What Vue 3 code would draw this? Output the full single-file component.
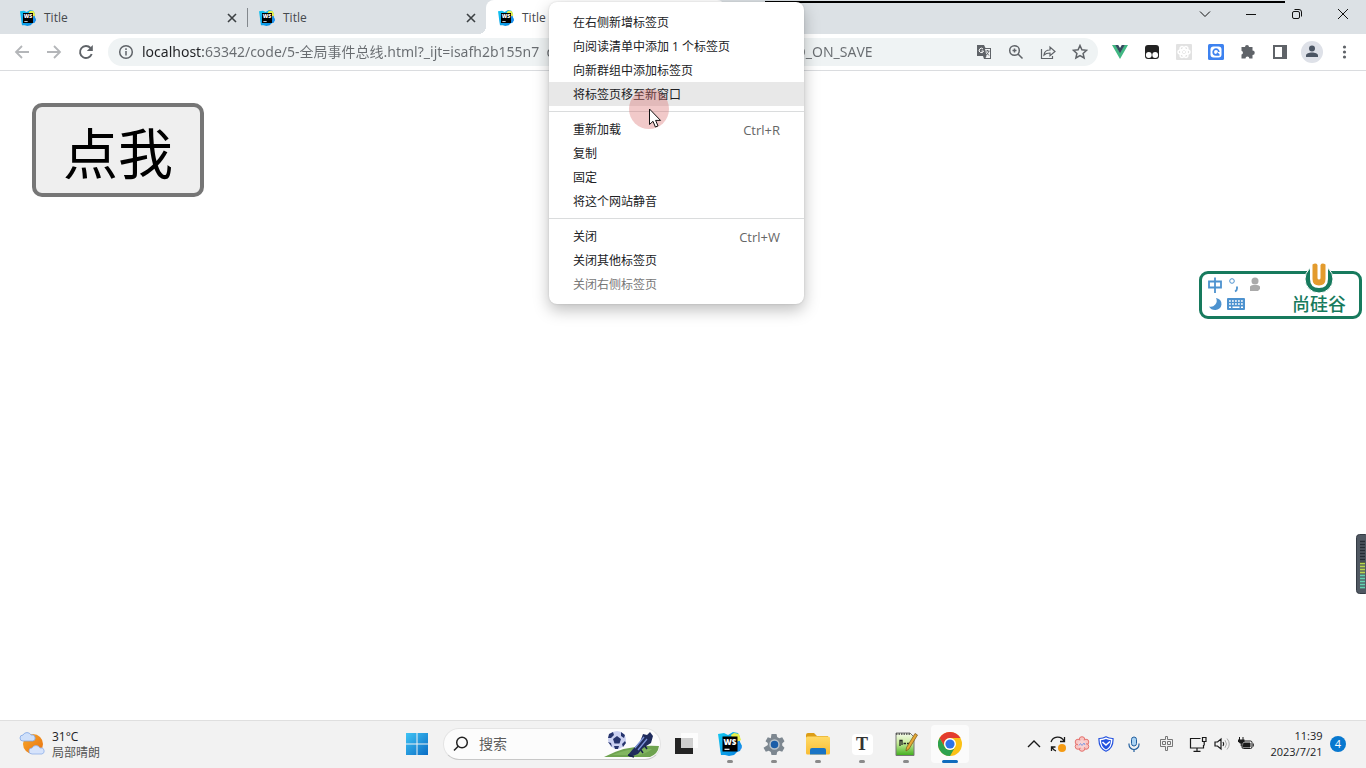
<script setup>
import { ref } from 'vue'

const tabs = [
  { id: 1, title: 'Title', active: false },
  { id: 2, title: 'Title', active: false },
  { id: 3, title: 'Title', active: true },
]

const url = ref('localhost:63342/code/5-全局事件总线.html?_ijt=isafh2b155n7  q3k8m0vd5tu2rate&_ij_reload=RELOAD_ON_SAVE')
const query = ref('')

const menuGroups = [
  [
    { label: '在右侧新增标签页' },
    { label: '向阅读清单中添加 1 个标签页' },
    { label: '向新群组中添加标签页' },
    { label: '将标签页移至新窗口', hover: true },
  ],
  [
    { label: '重新加载', keys: 'Ctrl+R' },
    { label: '复制' },
    { label: '固定' },
    { label: '将这个网站静音' },
  ],
  [
    { label: '关闭', keys: 'Ctrl+W' },
    { label: '关闭其他标签页' },
    { label: '关闭右侧标签页', disabled: true },
  ],
]

const darkBars = Array.from({ length: 8 }, (_, i) => 6 + i * 3)
const litBars = Array.from({ length: 9 }, (_, i) => 29 + i * 3)
</script>

<template>
  <div class="screen">
    <svg class="defs" aria-hidden="true">
      <defs>
        <linearGradient id="wsg" x1="0" y1="0" x2="1" y2="1">
          <stop offset="0" stop-color="#12c9f2" />
          <stop offset="1" stop-color="#087fe0" />
        </linearGradient>
        <linearGradient id="wing" x1="0" y1="0" x2="1" y2="1">
          <stop offset="0" stop-color="#3fc4f5" />
          <stop offset="1" stop-color="#0a6cc4" />
        </linearGradient>
        <linearGradient id="sun" x1="0" y1="0" x2="1" y2="1">
          <stop offset="0" stop-color="#f8a92c" />
          <stop offset="1" stop-color="#e8700f" />
        </linearGradient>
        <linearGradient id="fold" x1="0" y1="0" x2="0" y2="1">
          <stop offset="0" stop-color="#ffda66" />
          <stop offset="1" stop-color="#f9bd35" />
        </linearGradient>
        <linearGradient id="npp" x1="0" y1="0" x2="0" y2="1">
          <stop offset="0" stop-color="#f6fbef" />
          <stop offset="0.45" stop-color="#c8ec9a" />
          <stop offset="1" stop-color="#3fae1c" />
        </linearGradient>
        <symbol id="ws" viewBox="0 0 24 24">
          <path d="M0 2l6-1 4 2 5-3 5 1 2 4v5l2 4-2 5-3 1-3 3-5 1-4-1-4 0-1-6-1-8z" fill="url(#wsg)" />
          <path d="M13 3l3-2 5 1 2 6-3 2-6-4z" fill="#e6f04c" />
          <path d="M20 9l2 0-1 3 3 4-4 3z" fill="#1f8ff0" />
          <rect x="4.500" y="4.500" width="15" height="15" fill="#000" />
          <path d="M6.500 17.300h5" stroke="#fff" stroke-width="1.200" />
          <text x="5.500" y="12.600" class="wsText">WS</text>
        </symbol>
      </defs>
    </svg>

    <header class="browser">
      <div class="strip">
        <nav class="tabs" aria-label="标签页">
          <div v-for="t in tabs" :key="t.id" class="tab" :class="{ active: t.active }">
            <button class="tabMain"><svg class="fav"><use href="#ws" /></svg><span>{{ t.title }}</span></button>
            <button class="tabClose" aria-label="关闭标签页">
              <svg viewBox="0 0 16 16"><path d="M4 4l8 8M12 4l-8 8" stroke="#3c4043" stroke-width="1.600" /></svg>
            </button>
          </div>
        </nav>
        <div class="winCtl">
          <button aria-label="搜索标签页"><svg viewBox="0 0 16 16"><path d="M3 5.500l5 5 5-5" /></svg></button>
          <button aria-label="最小化"><svg viewBox="0 0 16 16"><path d="M3 8.500h10" /></svg></button>
          <button aria-label="还原"><svg viewBox="0 0 16 16"><rect x="3.500" y="5.500" width="7" height="7" rx="1.500" /><path d="M5.500 3.500h4.500q2.500 0 2.500 2.500v4.500" /></svg></button>
          <button aria-label="关闭"><svg viewBox="0 0 16 16"><path d="M3 3l10 10M13 3l-10 10" /></svg></button>
        </div>
      </div>

      <div class="toolbar">
        <button class="tool off" aria-label="后退"><svg viewBox="0 0 16 16"><path d="M15 8H2M8 2L2 8l6 6" /></svg></button>
        <button class="tool off" aria-label="前进"><svg viewBox="0 0 16 16"><path d="M1 8h13M8 2l6 6-6 6" /></svg></button>
        <button class="tool reload" aria-label="重新加载"><svg viewBox="0 0 16 16"><path d="M13.700 10A6 6 0 1 1 12.500 4" /><path d="M14.800 1v6h-6z" fill="#5f6368" stroke="none" /></svg></button>
        <div class="omni">
          <button class="info" aria-label="网站信息"><svg viewBox="0 0 16 16"><circle cx="8" cy="8" r="6.300" /><path d="M8 7v4.500M8 4.300v1.700" /></svg></button>
          <input v-model="url" class="url" aria-label="地址" spellcheck="false">
          <button class="tool" aria-label="翻译">
            <svg viewBox="0 0 16 16"><path d="M1 1h7l1.500 3H15v11H8l-1-3H1z" fill="#5f6368" stroke="none" /><path d="M9 5h5v9H9.500l1-2z" fill="#f1f3f4" stroke="none" /><path d="M7 5a2.200 2.200 0 1 0 .5 2H5.500" stroke="#fff" stroke-width="1" /><path d="M9.500 7h4M11.500 6v1M13 7q-1 3-3 4M10.500 8.500l2.500 3" stroke-width=".9" /></svg>
          </button>
          <button class="tool" aria-label="缩放"><svg viewBox="0 0 16 16"><circle cx="6.500" cy="6.500" r="4.800" /><path d="M10 10l4.500 4.500M4.500 6.500h4M6.500 4.500v4" /></svg></button>
          <button class="tool" aria-label="分享"><svg viewBox="0 0 16 16"><path d="M1.500 5v9.500h11V12M4 11q.5-5 6-5V3l5 4.500-5 4.300V9Q6 9 4 11z" stroke-width="1.200" /></svg></button>
          <button class="tool" aria-label="收藏"><svg viewBox="0 0 16 16"><path d="M8 1.500l1.900 4.300 4.700.5-3.500 3.100 1 4.600L8 11.600 3.900 14l1-4.600L1.400 6.300l4.700-.5z" /></svg></button>
        </div>
        <button class="tool" aria-label="Vue"><svg viewBox="0 0 16 16" class="plain"><path d="M0 1h3.500L8 8.500 12.500 1H16L8 15z" fill="#41b883" /><path d="M3.200 1H6.200L8 4l1.800-3h3L8 9.200z" fill="#35495e" /></svg></button>
        <button class="tool" aria-label="Tampermonkey"><svg viewBox="0 0 16 16" class="plain"><rect x="1" y="1" width="14" height="14" rx="3" fill="#222" /><circle cx="4.800" cy="11" r="2.900" fill="#fff" /><circle cx="11.200" cy="11" r="2.900" fill="#fff" /></svg></button>
        <button class="tool" aria-label="React"><svg viewBox="0 0 16 16" class="plain"><rect width="16" height="16" rx="1" fill="#e2e2e2" /><g fill="none" stroke="#fff"><ellipse cx="8" cy="8" rx="6" ry="2.500" /><ellipse cx="8" cy="8" rx="6" ry="2.500" transform="rotate(60 8 8)" /><ellipse cx="8" cy="8" rx="6" ry="2.500" transform="rotate(120 8 8)" /></g><circle cx="8" cy="8" r="1.200" fill="#fff" /></svg></button>
        <button class="tool" aria-label="Q"><svg viewBox="0 0 16 16" class="plain"><rect width="16" height="16" rx="1.500" fill="#3d82f0" /><rect x="2.500" y="2.500" width="11" height="11" rx="3" fill="#fff" /><path d="M10.800 8a2.800 2.800 0 1 0-2.800 2.800h3.500M8.800 8.800l2.200 2" fill="none" stroke="#3d82f0" stroke-width="1.700" /></svg></button>
        <button class="tool" aria-label="扩展程序"><svg viewBox="0 0 16 16" class="plain"><path d="M5 3a2 2 0 0 1 4 0h3.500v3.500a2 2 0 0 1 0 4.500v3.500H9.300a1.900 1.900 0 0 0-3.800 0H1.500v-4a1.900 1.900 0 0 0 0-3.700V3z" fill="#5f6368" /></svg></button>
        <button class="tool" aria-label="侧边栏"><svg viewBox="0 0 16 16" class="plain"><rect x="2" y="2" width="12" height="12" fill="none" stroke="#5f6368" stroke-width="2" /><path d="M10 2h4v12h-4z" fill="#5f6368" /></svg></button>
        <button class="tool avatar" aria-label="用户"><svg viewBox="0 0 22 22" class="plain"><circle cx="11" cy="11" r="11" fill="#dee1e8" /><circle cx="11" cy="7.500" r="3" fill="#4b5563" /><path d="M5 16v-1.500c0-4 12-4 12 0V16z" fill="#4b5563" /></svg></button>
        <button class="tool" aria-label="更多"><svg viewBox="0 0 16 16" class="plain"><g fill="#5f6368"><circle cx="8.500" cy="3" r="1.600" /><circle cx="8.500" cy="8" r="1.600" /><circle cx="8.500" cy="13" r="1.600" /></g></svg></button>
      </div>
    </header>

    <main class="page">
      <button class="clickMe">点我</button>
    </main>

    <footer class="taskbar">
      <button class="weather">
        <svg viewBox="0 0 26 24"><circle cx="14" cy="12" r="10" fill="url(#sun)" /><path d="M4 9a3 3 0 0 1 0-6 4.500 4.500 0 0 1 8 0 3 3 0 0 1 2 6z" fill="#cfe0fa" stroke="#7fa6e6" stroke-width=".8" /><path d="M13 22a3 3 0 0 1 0-6 4.500 4.500 0 0 1 8 0 3 3 0 0 1 2 6z" fill="#d6e3fb" stroke="#8fb0ea" stroke-width=".8" /></svg>
        <span class="wText"><span>31°C</span><span class="dim">局部晴朗</span></span>
      </button>

      <div class="apps">
        <button class="app" aria-label="开始"><svg viewBox="0 0 24 24"><path d="M1 1h10.500v10.500H1zM12.500 1H23v10.500H12.500zM1 12.500h10.500V23H1zM12.500 12.500H23V23H12.500z" fill="url(#wing)" /></svg></button>
        <label class="search">
          <svg class="mag" viewBox="0 0 16 16"><circle cx="9" cy="6.500" r="5.300" /><path d="M5.200 10.300L1 14.500" /></svg>
          <input v-model="query" placeholder="搜索" aria-label="搜索">
          <svg class="art" viewBox="0 0 56 28">
            <path d="M0 27Q24 14 55 16 54 24 46 27z" fill="#6fa350" />
            <path d="M8 25q20-8 40-6-6 5-14 6z" fill="#82b660" />
            <circle cx="13" cy="10" r="9" fill="#ccd2f2" />
            <path d="M13 6l4 3-1.500 4.500h-5L9 9zM5 4l4-2 1 3-3 3-3 0zM17 2l4 3-1 3-3-2zM4 12l3 1 1 4zM21 11l1 2-3 4-1-3zM10 16h5l-1 3h-3z" fill="#27356e" />
            <path d="M24 25l5-6 7-7 3-8 4 1 3-3 3 4-2 7-8 5-5 6-8 3z" fill="#202c5d" />
            <path d="M31 18l9-11M34 20l9-11" stroke="#7d94d8" stroke-width="1.300" />
            <path d="M24 25l6 2M37 20l2 3M41 16l2 3" stroke="#17224a" stroke-width="1.500" />
          </svg>
        </label>
        <button class="app" aria-label="任务视图"><svg viewBox="0 0 24 24"><rect x="1" y="6" width="18" height="16" fill="#242424" /><rect x="7" y="1" width="17" height="15" fill="#fff" opacity=".78" /></svg></button>
        <button class="app open" aria-label="WebStorm"><svg><use href="#ws" /></svg></button>
        <button class="app open" aria-label="设置"><svg viewBox="0 0 24 24"><path d="M9.500 2h5l.7 3 2 1.200 3-1 2.300 4-2.300 2.200v2l2.300 2.300-2.300 4-3-1-2 1.300-.7 3h-5l-.7-3-2-1.300-3 1-2.300-4L5.800 13v-2L3.500 9.200l2.300-4 3 1z" fill="#7d8790" /><circle cx="12.500" cy="12.500" r="4.500" fill="#1c5ea8" stroke="#b9c3cb" stroke-width="1.500" /></svg></button>
        <button class="app open" aria-label="文件资源管理器"><svg viewBox="0 0 24 24"><path d="M0 3q0-2 2-2h6l3 3h11v5H0z" fill="#dc9d17" /><rect y="4.500" width="24" height="18" rx="1.500" fill="url(#fold)" /><path d="M4 22.500V18q0-2 2-2h12q2 0 2 2v4.500z" fill="#1974c5" /></svg></button>
        <button class="app open typora" aria-label="Typora"><span>T</span></button>
        <button class="app open" aria-label="Notepad++"><svg viewBox="0 0 24 24"><path d="M2 1h14l4 4v18.500H2z" fill="url(#npp)" stroke="#777" /><path d="M2 2h15" stroke="#444" stroke-width="1.500" stroke-dasharray="1.500 1" /><path d="M6 14V8.500h2V13M9.500 11.500h2.500M13 11.500h2.500" stroke="#222" stroke-width="1.300" fill="none" /><path d="M21 1.500l2.500 1.500-8.500 14-3 2 .5-3.500z" fill="#e5a936" stroke="#795316" stroke-width=".7" /></svg></button>
        <button class="app open current" aria-label="Chrome"><svg viewBox="0 0 24 24"><circle cx="12" cy="12" r="12" fill="#fbc116" /><path d="M1.600 6a12 12 0 0 1 20.800 0H12a6 6 0 0 0-5.200 9z" fill="#e33b2e" /><path d="M1.600 6a12 12 0 0 0 10.400 18l5.200-9a6 6 0 0 1-10.400 0z" fill="#2da24e" /><circle cx="12" cy="12" r="6" fill="#fff" /><circle cx="12" cy="12" r="4.600" fill="#2d73e8" /></svg></button>
      </div>

      <div class="tray">
        <button aria-label="显示隐藏的图标"><svg viewBox="0 0 16 16"><path d="M2 11l6-6 6 6" stroke-width="1.400" /></svg></button>
        <button aria-label="更新"><svg viewBox="0 0 16 16"><path d="M1 6a7 7 0 0 1 13-1M14.500 1v4.500H10M1.500 15v-4h4M2 11q1 3 4 4" stroke-width="1.300" /><circle cx="12" cy="12" r="4" fill="#f59b13" stroke="none" /></svg></button>
        <button aria-label="录屏"><svg viewBox="0 0 16 16"><g fill="#f8c4c2" stroke="#e5736f"><circle cx="8" cy="3.500" r="2.800" /><circle cx="12" cy="6" r="2.800" /><circle cx="12" cy="10.500" r="2.800" /><circle cx="8" cy="12.500" r="2.800" /><circle cx="4" cy="10.500" r="2.800" /><circle cx="4" cy="6" r="2.800" /></g><circle cx="8" cy="8" r="4" fill="#f7d2d2" stroke="none" /><path d="M5 9.500l1.500-2 1.500 2 2-2.500 1 2" stroke="#829be0" /></svg></button>
        <button aria-label="安全"><svg viewBox="0 0 16 16"><path d="M8 .8q3 1.800 7 1.700Q15.500 12 8 15.200.5 12 1 2.500 5 2.600 8 .8z" fill="#fff" stroke="#2452df" stroke-width="1.200" /><path d="M8 3q2 1 5 1.200Q13 11 8 13.400 3 11 3 4.200 6 4 8 3z" fill="#2452df" stroke="none" /><path d="M4.500 6L8 9l4-3.500" stroke="#fff" stroke-width="1.600" /></svg></button>
        <button class="wide" aria-label="麦克风"><svg viewBox="0 0 16 16"><rect x="5.500" y="1" width="5" height="9" rx="2.500" fill="#a9d2f3" stroke="#215e9d" /><path d="M3 7.500v1a5 5 0 0 0 10 0v-1M8 13.500V16" stroke="#215e9d" stroke-width="1.200" /></svg></button>
        <button class="wide" aria-label="输入法"><svg viewBox="0 0 16 16"><path d="M7.500 .5h2v3h5v7h-5v4h-2v-4h-5v-7h5zM4.500 5.500v3h3v-3zM9.500 5.500v3h3v-3z" stroke="#777" /></svg></button>
        <button class="net" aria-label="网络"><svg viewBox="0 0 18 16"><path d="M11.500 2.500H1.500v9.500h13V9M8 12v3M4.500 15.300h7M13.500 1.500h3.500v4h-3.500zM15.200 5.500v4" stroke-width="1.200" /></svg></button>
        <button aria-label="音量"><svg viewBox="0 0 16 16"><path d="M1 6v4h2.500l3.500 3V3L3.500 6zM9 6q1.500 2 0 4" stroke-width="1.200" /><path d="M11 4.200q3 3.800 0 7.600M13 2.500q4.500 5.500 0 11" stroke="#aaa" /></svg></button>
        <button aria-label="电池"><svg viewBox="0 0 16 16"><path d="M1.500 1v3M5 1v3M3.200 7v3" /><path d="M0 3.500h6.500v2l-2 2h-2.500l-2-2z" fill="#191919" stroke="none" /><rect x="4" y="5" width="10" height="7.500" rx="1.500" /><path d="M6 7h6v4H5V9z" fill="#191919" stroke="#191919" /><path d="M15.300 7.500v3" /></svg></button>
        <button class="clock"><span>11:39</span><span>2023/7/21</span></button>
        <button class="badge">4</button>
      </div>
    </footer>

    <div class="recLine"></div>

    <div class="menu" role="menu">
      <div v-for="(g, i) in menuGroups" :key="i" class="group">
        <button v-for="m in g" :key="m.label" role="menuitem" class="item" :class="{ hover: m.hover }" :disabled="m.disabled">
          <span>{{ m.label }}</span><span v-if="m.keys" class="keys">{{ m.keys }}</span>
        </button>
      </div>
    </div>

    <div class="halo"></div>
    <svg class="cursor" viewBox="0 0 14 20"><path d="M1.500 1v15.500l3.500-3.200 2.400 5.700 2.600-1.100-2.400-5.500h4.900z" fill="#fff" stroke="#111" /></svg>

    <aside class="ime" aria-label="输入法状态栏">
      <div class="imeIcons">
        <svg viewBox="0 0 16 16"><path d="M2 4.500h12v6H2zM8 .5V16" /></svg>
        <svg viewBox="0 0 16 16"><circle cx="5" cy="4" r="2.300" stroke-width="1" /><path d="M10 9.500v2q0 2-2 3" /></svg>
        <svg viewBox="0 0 16 16"><circle cx="8" cy="4" r="3.500" fill="#aaa" stroke="none" /><path d="M3 14V9.500Q4 8 6 8h4q2 0 3 1.500V12l-2 2H5z" fill="#aaa" stroke="none" /></svg>
        <svg viewBox="0 0 16 16"><path d="M9 2a6 6 0 0 1-7 8.500Q4 14 8 14a6 6 0 0 0 1-12z" fill="#4d92cf" stroke="none" /></svg>
        <svg viewBox="0 0 18 16" class="kbd"><rect y="2" width="18" height="12" rx="1" fill="#4d92cf" stroke="none" /><path d="M2 5h14M2 8h14" stroke="#fff" stroke-width="1.600" stroke-dasharray="1.800 1.200" /><path d="M2 11.300h2M5.500 11.300h7M14 11.300h2" stroke="#fff" stroke-width="1.600" /></svg>
      </div>
      <div class="brand">
        <svg viewBox="0 0 32 32"><circle cx="16" cy="17" r="14" fill="#177a5d" stroke="#fff" stroke-width="1" /><path d="M7 0v17q0 9 9 9t9-9V0z" fill="#fff" /><path d="M9.500 2.500q3.500-2 5 .5v13q0 1.500 1.500 1.500t1.500-1.500V3q1.500-2.500 5-.5V17q0 6.500-6.500 6.500T9.500 17z" fill="#e39b2d" /></svg>
        <span>尚硅谷</span>
      </div>
    </aside>

    <svg class="meter" viewBox="0 0 10 60">
      <rect x=".5" y=".5" width="12" height="59" rx="3" fill="#505862" stroke="#343b44" />
      <path v-for="y in darkBars" :key="y" :d="`M4 ${y + 1.5}h5`" stroke="#242c34" stroke-width="1.500" />
      <path v-for="y in litBars" :key="y" :d="`M4 ${y + 0.5}h5`" :stroke="y < 41 ? '#b9d64f' : '#63d3b0'" stroke-width="1.700" />
    </svg>
  </div>
</template>

<style>
html, body { margin: 0; overflow: hidden; }
</style>

<style scoped>
.screen {
  position: relative;
  display: flex;
  flex-direction: column;
  min-height: 100vh;
  background: #fff;
  color: #202124;
  font: 12px/16px "Open Sans", "Noto Sans CJK SC", sans-serif;
  overflow: hidden;
}
.defs { position: absolute; width: 0; height: 0; }
.wsText { font: 800 8px "Open Sans", sans-serif; fill: #fff; }
button { border: 0; padding: 0; margin: 0; background: none; font: inherit; color: inherit; }
input { border: 0; padding: 0; margin: 0; background: none; outline: 0; font: inherit; min-width: 0; }
svg { display: block; flex: none; width: 16px; height: 16px; fill: none; }

.strip { display: flex; justify-content: space-between; height: 34px; background: #dce1e5; }
.tabs { display: flex; padding-left: 8px; }
.tab { position: relative; display: flex; align-items: center; width: 239px; padding: 1px 7px 0 12px; box-sizing: border-box; color: #45494d; }
.tab:first-child::after { content: ""; position: absolute; right: -1px; top: 8px; width: 1px; height: 19px; background: #83888d; }
.tabMain { display: flex; flex: 1; align-items: center; gap: 8px; }
.active { background: #fff; border-radius: 8px 8px 0 0; }
.active::before { content: ""; position: absolute; left: -8px; bottom: 0; width: 8px; height: 8px; background: radial-gradient(circle at 0 0, #dce1e5 8px, #fff 8px); }
.winCtl { display: flex; height: 28px; }
.winCtl button { display: grid; place-items: center; width: 46px; }
.winCtl svg { stroke: #111; }

.toolbar { display: flex; align-items: center; height: 36px; padding: 0 6px; border-bottom: 1px solid #dadcdf; }
.tool { display: grid; place-items: center; width: 32px; height: 28px; flex: none; }
.tool svg { stroke: #5f6368; stroke-width: 1.5; }
.tool svg.plain { stroke: none; }
.tool.off svg { stroke: #b4b6b9; stroke-width: 1.8; }
.tool.reload svg { stroke-width: 1.9; }
.avatar svg { width: 22px; height: 22px; }
.omni { display: flex; flex: 1; align-items: center; height: 28px; margin: 0 6px; padding: 0 2px 0 10px; border-radius: 14px; background: #eff3f4; }
.info svg { stroke: #5f6368; stroke-width: 1.5; }
.url {
  flex: 1;
  height: 24px;
  margin-left: 8px;
  font-family: "Noto Sans", "Noto Sans CJK SC", sans-serif;
  font-size: 14px;
  font-kerning: none;
  line-height: 24px;
  color: transparent;
  background: linear-gradient(90deg, #202124 61px, #686c70 61px);
  background-clip: text;
}

.page { flex: 1; padding: 32px; }
.clickMe { height: 94px; padding: 0 27px; border: 4px solid #767676; border-radius: 10px; background: #efefef; color: #000; font: 55px/80px "Noto Sans CJK SC", sans-serif; }

.taskbar { display: grid; grid-template-columns: 1fr auto 1fr; height: 46px; padding-bottom: 1px; border-top: 1px solid #dfdfdf; background: #f2f2f2; }
.weather { display: flex; align-items: center; gap: 7px; padding-left: 19px; text-align: left; }
.weather svg { width: 26px; height: 24px; }
.wText { display: grid; padding-top: 2px; }
.dim { color: #555; }
.apps { display: flex; align-items: center; padding-left: 1px; }
.app { position: relative; display: grid; place-items: center; width: 44px; height: 46px; }
.app svg { width: 24px; height: 24px; }
.open::after { content: ""; position: absolute; left: 19px; bottom: 4px; width: 6px; height: 3px; border-radius: 2px; background: #8a8a8a; }
.current { background: #fbfbfb; border-radius: 4px; width: 38px; height: 38px; margin: 0 3px; }
.current::after { left: 11px; bottom: 0; width: 16px; background: #0f6cbd; }
.typora span { width: 21px; height: 21px; border-radius: 4px; background: #fff; color: #333; font: 700 18px/21px "Liberation Serif", serif; }
.search { display: flex; align-items: center; width: 218px; height: 32px; margin: 0 3px 0 4px; border: 1px solid #e4e4e4; border-bottom-color: #c8c8c8; border-radius: 16px; box-sizing: border-box; background: #fcfcfc; overflow: hidden; padding-left: 9px; }
.mag { stroke: #222; stroke-width: 1.5; }
.search input { flex: 1; margin-left: 10px; font-size: 14px; }
.search input::placeholder { color: #5c5c5c; opacity: 1; }
.search .art { width: 56px; height: 28px; }
.tray { display: flex; align-items: center; justify-content: flex-end; padding-right: 20px; }
.tray button { display: grid; place-items: center; width: 24px; height: 40px; flex: none; }
.tray svg { stroke: #191919; }
.tray .wide { width: 32px; }
.tray .net { margin-left: 4px; }
.tray .net svg { width: 18px; }
.tray .clock { width: auto; min-width: 53px; margin: 0 7px 0 12px; justify-items: end; place-content: center; font-size: 11px; }
.tray .badge { width: 16px; height: 16px; border-radius: 8px; background: #0878cf; color: #fff; font-size: 11px; line-height: 16px; }

.recLine { position: absolute; left: 765px; top: 1px; width: 520px; height: 2px; background: #000; }

.menu { position: absolute; left: 549px; top: 2px; width: 255px; padding: 8px 0; border-radius: 8px; background: #fff; box-shadow: 0 6px 16px rgba(0, 0, 0, .26), 0 0 2px rgba(0, 0, 0, .15); }
.group + .group { margin-top: 5px; padding-top: 5px; border-top: 1px solid #dadcdd; }
.item { display: flex; align-items: center; justify-content: space-between; width: 100%; height: 24px; padding: 2px 24px 0; text-align: left; }
.item.hover { background: #e8e8e8; }
.item:disabled { color: #777; }
.keys { color: #666; font-size: 13px; }
.halo { position: absolute; left: 629px; top: 89px; width: 40px; height: 40px; border-radius: 50%; background: rgba(214, 100, 100, .35); }
.cursor { position: absolute; left: 648px; top: 108px; width: 14px; height: 20px; }

.ime { position: absolute; right: 4px; top: 271px; display: flex; justify-content: space-between; width: 163px; height: 48px; box-sizing: border-box; border: 3px solid #177a5d; border-radius: 9px; background: #fff; }
.imeIcons { display: grid; grid-template-columns: repeat(3, 20px); align-content: start; gap: 3px 0; padding: 3px 0 0 5px; }
.imeIcons svg { stroke: #4d92cf; stroke-width: 1.8; }
.imeIcons .kbd { width: 18px; }
.brand { display: grid; justify-items: center; align-content: start; margin: -12px 13px 0 0; color: #177a5d; font: 500 18px/18px "Noto Sans CJK SC", sans-serif; }
.brand svg { width: 32px; height: 32px; }
.meter { position: absolute; right: 0; top: 534px; width: 10px; height: 60px; }
</style>
